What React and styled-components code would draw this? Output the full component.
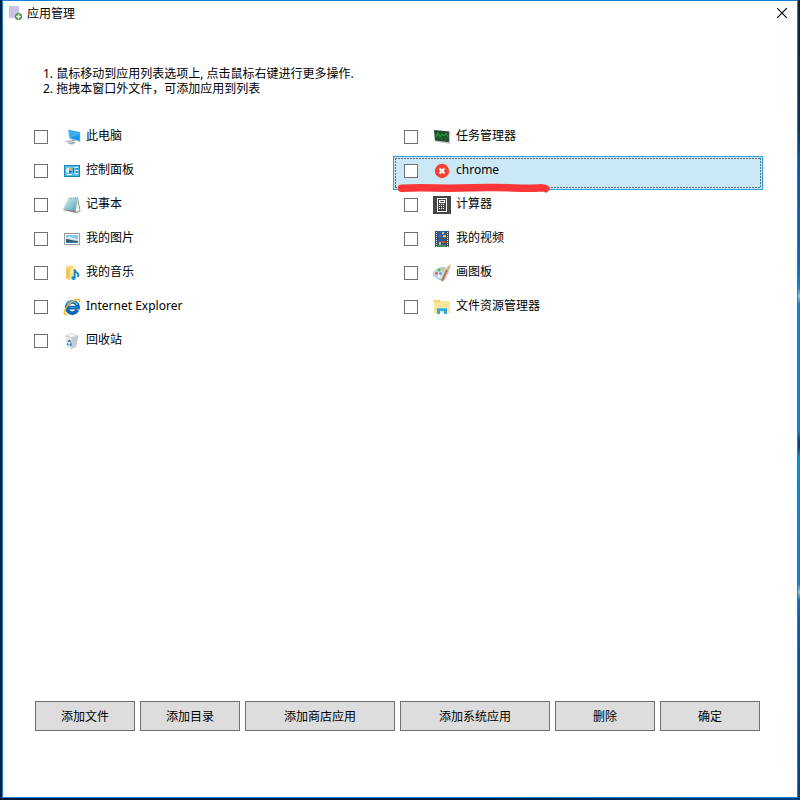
import React, { useState } from "react";
import styled, { createGlobalStyle, css } from "styled-components";

const GlobalStyle = createGlobalStyle`
  * {
    box-sizing: border-box;
  }

  body {
    margin: 0;
    background: #001c3c;
    color: #000;
    font-family: "Noto Sans", "Noto Sans CJK SC", sans-serif;
    font-size: 12px;
  }
`;

const Desktop = styled.div`
  min-height: 100vh;
  padding: 0 2px 2px;
  display: flex;
  background:
    linear-gradient(90deg, #001a38 60%, #003f7c) bottom / 100% 2px no-repeat,
    linear-gradient(
      #06223c,
      #06345a 16%,
      #0058a8 20%,
      #0068c4 33%,
      #008ad2 36%,
      #8cc8e6 37%,
      #008ad2 38%,
      #0088d4 54%,
      #00408c 55%,
      #00408c 56%,
      #0090d4 57%,
      #0082d0 73%,
      #8cc8e6 74%,
      #0070c4 75%,
      #005cb4 78%,
      #003f7c
    ) right / 2px 100% no-repeat,
    #001c3c;
`;

const Window = styled.main`
  flex: 1;
  min-width: 0;
  display: flex;
  flex-direction: column;
  background: #fff;
  border: 1px solid #1880d7;
`;

const TitleBar = styled.header`
  display: flex;
  align-items: center;
  height: 24px;
  padding: 0 5px;
`;

const AppIcon = styled.svg`
  width: 16px;
  height: 16px;
  margin-right: 3px;
`;

const Title = styled.h1`
  flex: 1;
  margin: 0;
  padding-top: 2px;
  font-size: 12px;
  font-weight: normal;
  line-height: 16px;
`;

const CloseButton = styled.button`
  display: flex;
  align-items: center;
  justify-content: center;
  width: 20px;
  height: 20px;
  padding: 0;
  border: none;
  background: none;
`;

const Tips = styled.ol`
  margin: 41px 40px 0;
  padding: 0;
  list-style: none;
  line-height: 15px;
`;

const AppGrid = styled.ul`
  display: grid;
  grid-template-columns: repeat(2, minmax(0, 1fr));
  margin: 26px 34px 0 20px;
  padding: 0;
  list-style: none;
`;

const selectedStyle = css`
  border-color: #26a0da;
  background: #cbe8f6;

  &::before {
    content: "";
    position: absolute;
    inset: 1px;
    pointer-events: none;
    background:
      repeating-linear-gradient(90deg, #5f6b71 0 2px, transparent 2px 3px) top / 100% 1px no-repeat,
      repeating-linear-gradient(90deg, #5f6b71 0 2px, transparent 2px 3px) bottom / 100% 1px no-repeat,
      repeating-linear-gradient(#5f6b71 0 2px, transparent 2px 3px) left / 1px 100% no-repeat,
      repeating-linear-gradient(#5f6b71 0 2px, transparent 2px 3px) right / 1px 100% no-repeat;
  }
`;

const AppRow = styled.li`
  position: relative;
  height: 34px;
  padding: 0 10px 4px;
  border: 1px solid transparent;
  ${(props) => props.$selected && selectedStyle}
`;

const AppLabel = styled.label`
  display: flex;
  align-items: center;
  height: 100%;
`;

const Checkbox = styled.input`
  appearance: none;
  flex: none;
  width: 14px;
  height: 14px;
  margin: 0 15px 0 0;
  border: 1px solid #707070;
  background: #fff;

  &:checked {
    background: #707070;
    box-shadow: inset 0 0 0 2px #fff;
  }
`;

const IconSvg = styled.svg`
  flex: none;
  width: 18px;
  height: 18px;
  margin-right: 5px;
`;

const AppName = styled.span`
  line-height: 16px;
  padding-bottom: 2px;
  white-space: nowrap;
`;

const Marker = styled.svg`
  position: absolute;
  left: 3px;
  bottom: -4px;
  width: 154px;
  height: 10px;
  z-index: 1;
  pointer-events: none;
`;

const ButtonBar = styled.footer`
  display: flex;
  gap: 5px;
  margin-top: auto;
  padding: 20px 32px 66px;
`;

const ActionButton = styled.button`
  flex: 0 1 ${(props) => (props.$wide ? "150px" : "100px")};
  height: 30px;
  padding: 2px 0 0;
  border: 1px solid #707070;
  background: #ddd;
  color: #000;
  font-family: inherit;
  font-size: 12px;
  line-height: 16px;
  white-space: nowrap;
`;

const icons = {
  computer: (
    <>
      <path d="M1 13.5 8 11.5l4 1.5-6 2.2z" fill="#c3c9cd" />
      <path d="m5 15.5 5-1.8 3 1-4 2z" fill="#a3abb0" />
      <path d="m10 10 3 1-1 2-3-.8z" fill="#87929a" />
      <path d="M5 1.5 17.3 4v10L6.4 10.5z" fill="#8ebbd8" />
      <path d="M5.8 2.3 16.7 4.5v8.3L7 9.8z" fill="#1797e8" />
      <path d="M5.8 2.3 16.7 4.5v2L7 9.8z" fill="#3aaef2" />
    </>
  ),
  control: (
    <>
      <rect x="1" y="3" width="16" height="12" fill="#1c86ba" />
      <rect x="2" y="4" width="14" height="10" fill="#58bdea" />
      <circle cx="6" cy="8.4" r="2.8" fill="#e6f6fd" />
      <path d="M6 8.4V5.4a3 3 0 0 1 3 3z" fill="#f5a824" />
      <path d="M6 8.4h3a3 3 0 0 1-3 3z" fill="#147ec0" />
      <path d="M11.5 5.5H15M11.5 8.5H15M11.5 11.5H15" stroke="#e9f8ff" />
      <path d="M10.5 6v5M13 6.8h2M13 9.8h2" stroke="#126aa3" />
      <path d="M4 12.5h5" stroke="#d8f2ff" />
    </>
  ),
  notepad: (
    <>
      <defs>
        <linearGradient id="noteFill" x2="1" y2="1">
          <stop stopColor="#e2f5f7" />
          <stop offset="1" stopColor="#4ba1b4" />
        </linearGradient>
      </defs>
      <path d="m15 2 2.5 13-4 2L0 14z" fill="#877b6b" />
      <path d="m14 2 2.8 12.5-3.6 1.7L12 14z" fill="#f0efe8" />
      <path d="M5.5 2 15 1.5 12.5 15 0 13.5z" fill="url(#noteFill)" />
      <path d="m6 2.5 8.5-.8" stroke="#788f96" strokeDasharray="1 1" />
    </>
  ),
  picture: (
    <>
      <rect x="1.5" y="3.5" width="15" height="11" fill="#fff" stroke="#9c9c9c" />
      <rect x="3" y="5" width="12" height="8" fill="#85c7ef" />
      <path d="M3 8q4-3 7 0l5 1v2H3z" fill="#d8e8ec" />
      <path d="M3 9q3 0 5 1l7 1v2H3z" fill="#315c65" />
      <path d="M3 12h12v1H3z" fill="#2185ba" />
    </>
  ),
  music: (
    <>
      <path d="M5 1.7h5l2 1.5v10.3L7 16l-4-1.5z" fill="#ffe394" />
      <path d="m3 3 4 2v11l-4-1.7z" fill="#f2c75e" />
      <path d="m3 3 2-1.3h5L7 5z" fill="#f9d980" />
      <path d="M11.7 14V5.5q.5 2.5 3 4 1.2 1 .2 3.5" fill="none" stroke="#1784ce" strokeWidth="1.9" />
      <ellipse cx="10.6" cy="14" rx="2.2" ry="1.9" fill="#1a91df" />
    </>
  ),
  ie: (
    <>
      <path d="M14.4 12A5.6 5.6 0 1 1 15 9.6H5.5" fill="none" stroke="#1267ae" strokeWidth="3.8" />
      <path d="M4.2 7q1.6-3.6 5.6-3.4 3.4.3 4.6 3.4" fill="none" stroke="#4eb9ef" strokeWidth="1.8" />
      <path d="M6.5 9.4h8" stroke="#2f97d9" strokeWidth="1.2" />
      <path d="M4 16.2C-.8 18 1 10.5 7 5.2S17.5.6 16.6 4" fill="none" stroke="#efb52b" strokeWidth="1.5" />
    </>
  ),
  recycle: (
    <>
      <path d="m2.5 4 6-2.3L15.3 4 13 15l-5 2-4-2z" fill="#dfe3e6" />
      <path d="m2.5 4 6 1.5L8 17l-4-2z" fill="#e9edef" />
      <path d="m8.5 5.5 6.8-1.5L13 15l-5 2z" fill="#c6cbcf" />
      <path d="m2.5 4 6-2.3L15.3 4l-6.8 1.5z" fill="#f8f9fa" stroke="#b5bcc1" strokeWidth=".6" />
      <path d="m4.8 10 1.4-1.6L7.8 10M8.3 11l-.5 2.2H6.4M5.2 13l-1-1.5" fill="none" stroke="#2283cf" strokeWidth="1.4" />
    </>
  ),
  taskmgr: (
    <>
      <path d="m1 2 16.5 1.5L16.8 16 2 13.5z" fill="#c8cbc8" />
      <path d="m1 2 15 1.5v10.7L2 12.5z" fill="#39463d" />
      <path d="m2 3 13 1.2v8.8L3 11.5z" fill="#164d25" />
      <path d="M2 6.5l14 1M2.5 9.5l13 1.2M5 3v9M8.5 3.5v9M12 4v9" stroke="#28733a" strokeWidth=".6" />
      <path d="m3 9 2-4 2 4 2-3 2 2 2-3 2 4" fill="none" stroke="#28a641" />
    </>
  ),
  error: (
    <>
      <circle cx="9" cy="9" r="7.2" fill="#f44336" />
      <path d="m6.5 6.5 5 5m0-5-5 5" stroke="#fff" strokeWidth="2" />
    </>
  ),
  calculator: (
    <>
      <path d="M0 0h18v18H0z" fill="#464646" />
      <rect x="4.5" y="2.5" width="9" height="13" fill="none" stroke="#fff" />
      <rect x="6.5" y="4.5" width="5" height="2" fill="none" stroke="#fff" />
      <path d="M6 8.5h6M6 10.5h6M6 12.5h6" stroke="#fff" strokeDasharray="1 1" />
    </>
  ),
  video: (
    <>
      <path d="M2 1h14v16H2z" fill="#484b4d" />
      <path d="M3.5 2v15M14.5 2v15" stroke="#e6e6e6" strokeDasharray="1 1" />
      <path d="M5 1h8v7H5z" fill="#1b63bd" />
      <path d="M5 9h8v8H5z" fill="#245fa9" />
      <path d="M9 2h2v2H9zM10 5h3v2h-3z" fill="#e8c53a" />
      <path d="M6 5h2v2H6zM9 11h3v2H9z" fill="#d5492e" />
      <path d="M6 12h2v3H6z" fill="#e4b93c" />
      <path d="M5 15h8v2H5zM10 7h3v1h-3z" fill="#409458" />
    </>
  ),
  paint: (
    <>
      <path d="M2 7C6 2 14 3 15 7s-2 3-2 5 0 4-4 4S3 13 1 12s-.5-3 1-5z" fill="#c2dcec" stroke="#87adc5" strokeWidth=".7" />
      <circle cx="6.2" cy="6.2" r="1.4" fill="#4db94b" />
      <circle cx="10" cy="5.4" r="1.3" fill="#efb840" />
      <circle cx="3.6" cy="9.4" r="1.4" fill="#e15843" />
      <circle cx="7.6" cy="9.4" r="1.2" fill="#5690d0" />
      <circle cx="6" cy="12.4" r="1.3" fill="#f7fbfd" />
      <path d="M9 17 14 6" stroke="#c9722f" strokeWidth="2" />
      <path d="m13.3 7 .8-4 3.5-3-.5 4.2-2.3 3.5z" fill="#dcb47c" />
      <path d="m13.3 6.5 1.7.8" stroke="#76858f" />
    </>
  ),
  explorer: (
    <>
      <path d="M1 2h5l1 1.5h10V15H1z" fill="#f3bd43" />
      <path d="M1 4h6l1-1h9v12H1z" fill="#ffe69b" />
      <path d="M2 3h3" stroke="#fff0bd" />
      <path d="M4 10h10v6h-3v-3H7v3H4z" fill="#2ba8e5" />
      <path d="M4 10h10v1H4z" fill="#54c1ee" />
    </>
  ),
};

const apps = [
  { name: "此电脑", icon: "computer" },
  { name: "任务管理器", icon: "taskmgr" },
  { name: "控制面板", icon: "control" },
  { name: "chrome", icon: "error", marked: true },
  { name: "记事本", icon: "notepad" },
  { name: "计算器", icon: "calculator" },
  { name: "我的图片", icon: "picture" },
  { name: "我的视频", icon: "video" },
  { name: "我的音乐", icon: "music" },
  { name: "画图板", icon: "paint" },
  { name: "Internet Explorer", icon: "ie" },
  { name: "文件资源管理器", icon: "explorer" },
  { name: "回收站", icon: "recycle" },
];

const actions = [
  { text: "添加文件" },
  { text: "添加目录" },
  { text: "添加商店应用", wide: true },
  { text: "添加系统应用", wide: true },
  { text: "删除" },
  { text: "确定" },
];

const AppItem = ({ app, selected, onSelect }) => {
  return (
    <AppRow $selected={selected} onClick={onSelect}>
      <AppLabel>
        <Checkbox type="checkbox" />
        <IconSvg viewBox="0 0 18 18" aria-hidden="true">
          {icons[app.icon]}
        </IconSvg>
        <AppName>{app.name}</AppName>
      </AppLabel>
      {app.marked && (
        <Marker viewBox="0 0 154 10" aria-hidden="true">
          <path
            d="M4.5 5.2Q20 4.6 38 5t38-.2 40 .1 28-.2q3 0 4.5 1"
            fill="none"
            stroke="#fc3739"
            strokeWidth="7.5"
            strokeLinecap="round"
          />
        </Marker>
      )}
    </AppRow>
  );
};

const App = () => {
  const [selected, setSelected] = useState("chrome");

  return (
    <>
      <GlobalStyle />
      <Desktop>
        <Window>
          <TitleBar>
            <AppIcon viewBox="0 0 16 16" aria-hidden="true">
              <path d="M1 1h10v12H1z" fill="#cdc0e6" />
              <circle cx="10.5" cy="11.5" r="3.6" fill="#3e9b45" />
              <path d="M10.5 9.3v4.4M8.3 11.5h4.4" stroke="#fff" strokeWidth="1.4" />
            </AppIcon>
            <Title>应用管理</Title>
            <CloseButton type="button" aria-label="关闭">
              <svg width="10" height="10" viewBox="0 0 10 10">
                <path d="m0 0 10 10M10 0 0 10" stroke="#000" strokeWidth="1.2" />
              </svg>
            </CloseButton>
          </TitleBar>

          <Tips>
            <li>1. 鼠标移动到应用列表选项上, 点击鼠标右键进行更多操作.</li>
            <li>2. 拖拽本窗口外文件，可添加应用到列表</li>
          </Tips>

          <AppGrid>
            {apps.map((app) => (
              <AppItem
                key={app.name}
                app={app}
                selected={selected === app.name}
                onSelect={() => setSelected(app.name)}
              />
            ))}
          </AppGrid>

          <ButtonBar>
            {actions.map((action) => (
              <ActionButton key={action.text} type="button" $wide={action.wide}>
                {action.text}
              </ActionButton>
            ))}
          </ButtonBar>
        </Window>
      </Desktop>
    </>
  );
};

export default App;
